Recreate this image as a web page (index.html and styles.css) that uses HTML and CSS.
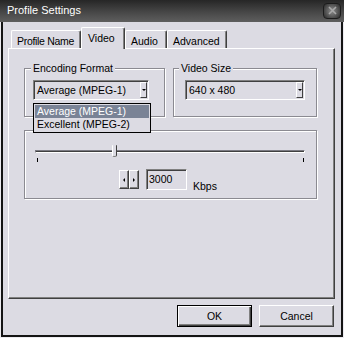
FILE: index.html
```html
<!DOCTYPE html>
<html lang="en">
<head>
    <meta charset="UTF-8">
    <title>Profile Settings</title>
    <link rel="stylesheet" href="styles.css">
</head>
<body>
    <div class="window">
        <!-- title bar -->
        <div class="titlebar">
            <span class="title">Profile Settings</span>
            <span class="close">
                <svg width="9" height="9" viewBox="0 0 9 9"><path d="M1 1 L8 8 M8 1 L1 8" stroke="#a9a9a9" stroke-width="1.6"/></svg>
            </span>
        </div>

        <div class="frame">
            <div class="client">
                <div class="tabs">
                    <div class="tab tab-name">Profile Name</div>
                    <div class="tab tab-video active">Video</div>
                    <div class="tab tab-audio">Audio</div>
                    <div class="tab tab-adv">Advanced</div>
                </div>

                <div class="panel">
                    <div class="group-row">
                        <fieldset class="group group-enc">
                            <legend>Encoding Format</legend>
                            <div class="combo-wrap">
                                <div class="combo combo-enc">
                                    <span class="combo-text">Average (MPEG-1)</span>
                                    <span class="combo-btn"></span>
                                </div>
                                <!-- open drop list -->
                                <ul class="droplist">
                                    <li class="sel">Average (MPEG-1)</li>
                                    <li>Excellent (MPEG-2)</li>
                                </ul>
                            </div>
                        </fieldset>
                        <fieldset class="group group-size">
                            <legend>Video Size</legend>
                            <div class="combo combo-size">
                                <span class="combo-text">640 x 480</span>
                                <span class="combo-btn"></span>
                            </div>
                        </fieldset>
                    </div>

                    <fieldset class="group group-rate">
                        <div class="slider">
                            <div class="track"></div>
                            <span class="thumb"></span>
                        </div>
                        <div class="ticks"><span></span><span></span></div>
                        <div class="rate-row">
                            <div class="spin">
                                <span class="spin-btn"><i class="arr-left"></i></span>
                                <span class="spin-btn"><i class="arr-right"></i></span>
                            </div>
                            <div class="edit">3000</div>
                            <span class="unit">Kbps</span>
                        </div>
                    </fieldset>
                </div>

                <div class="buttons">
                    <button class="btn default">OK</button>
                    <button class="btn">Cancel</button>
                </div>
            </div>
        </div>
    </div>
</body>
</html>
```

FILE: styles.css
```css
* {
    box-sizing: border-box;
    margin: 0;
    padding: 0;
}
body {
    background: #dcdbe3;
    font-family: "Liberation Sans", Arial, sans-serif;
    font-size: 10.5px;
    line-height: 13px;
    color: #000;
    overflow: hidden;
}
.window {
    width: 344px;
    height: 338px;
    display: flex;
    flex-direction: column;
}

/* title bar */
.titlebar {
    height: 22px;
    display: flex;
    align-items: center;
    justify-content: space-between;
    padding: 0 3px 1px 7px;
    background: linear-gradient(to bottom, #262626, #474747 55%, #5e5e5e);
}
.title {
    color: #fff;
    font-size: 11px;
}
.close {
    width: 18px;
    height: 16px;
    display: flex;
    align-items: center;
    justify-content: center;
    border: 1px solid #1c1c1c;
    border-radius: 4px;
    background: radial-gradient(circle, #7a7a7a 20%, #3e3e3e 80%);
}

.frame {
    flex: 1;
    display: flex;
    border: 1px solid #ecebf0;
    border-top: none;
}
.client {
    flex: 1;
    display: flex;
    flex-direction: column;
    border: 2px solid #141414;
    border-top: none;
    padding: 5px 6px 8px 5px;
}

/* tabs */
.tabs {
    height: 21px;
    display: flex;
    align-items: flex-end;
    padding-left: 3px;
}
.tab {
    height: 18px;
    padding: 4px 0 0 5px;
    border-top: 1px solid #fff;
    border-left: 1px solid #fff;
    border-right: 1px solid #404040;
    border-radius: 2px 2px 0 0;
    box-shadow: inset -1px 0 0 #808080;
    background: #dcdbe3;
    white-space: nowrap;
    overflow: hidden;
}
.tab-name {
    width: 70px;
    letter-spacing: -0.3px;
}
.tab-video { width: 44px; }
.tab-audio { width: 42px; }
.tab-adv { width: 60px; }
.tab.active {
    height: 22px;
    margin-bottom: -1px;
    padding-left: 6px;
    position: relative;
    z-index: 1;
}

/* tab page */
.panel {
    height: 251px;
    padding: 13px 0 0 15px;
    border-top: 1px solid #fff;
    border-left: 1px solid #fff;
    border-right: 1px solid #404040;
    border-bottom: 1px solid #404040;
    box-shadow: inset -1px -1px 0 #808080;
}
.group-row {
    display: flex;
    gap: 8px;
}
.group {
    min-width: 0;
    border: 1px solid #8b8a91;
    box-shadow: 1px 1px 0 #fff, inset 1px 1px 0 #fff;
}
.group legend {
    padding: 0 2px;
    background: #dcdbe3;
    line-height: 13px;
}
.group-enc {
    width: 141px;
    padding: 5px 15px 16px 8px;
}
.group-enc legend { margin-left: -2px; }
.group-size {
    width: 144px;
    padding: 5px 11px 16px 11px;
}
.group-size legend { margin-left: -6px; }

/* combo boxes */
.combo-wrap {
    position: relative;
}
.combo {
    height: 20px;
    display: flex;
    align-items: center;
    justify-content: space-between;
    padding: 0 1px 0 3px;
    border-top: 1px solid #808080;
    border-left: 1px solid #808080;
    border-right: 1px solid #fff;
    border-bottom: 1px solid #fff;
    box-shadow: inset 1px 1px 0 #404040;
}
.combo-enc { width: 116px; }
.combo-size { width: 120px; }
.combo-text {
    padding-top: 1px;
}
.combo-btn {
    width: 7px;
    height: 16px;
    display: flex;
    align-items: center;
    justify-content: center;
    border-top: 1px solid #fff;
    border-left: 1px solid #fff;
    border-right: 1px solid #404040;
    border-bottom: 1px solid #404040;
}
.combo-btn::after {
    content: "";
    border-left: 2px solid transparent;
    border-right: 2px solid transparent;
    border-top: 2px solid #000;
}
.droplist {
    position: absolute;
    top: 23px;
    left: 0;
    width: 118px;
    z-index: 2;
    list-style: none;
    padding: 1px;
    border: 1px solid #000;
    background: #dcdbe3;
}
.droplist li {
    height: 13px;
    padding-left: 2px;
}
.droplist li.sel {
    background: #7a8396;
    color: #fff;
}

/* bitrate group */
.group-rate {
    width: 293px;
    margin-top: 13px;
    padding: 0 11px 7px 10px;
}
.slider {
    position: relative;
    height: 13px;
    margin-top: 14px;
    padding-top: 5px;
}
.track {
    height: 3px;
    border-top: 1px solid #7b7a82;
    border-left: 1px solid #7b7a82;
    border-bottom: 1px solid #fff;
    border-right: 1px solid #fff;
    background: #404040;
}
.thumb {
    position: absolute;
    top: 0;
    left: 77px;
    width: 5px;
    height: 12px;
    background: #dcdbe3;
    border-left: 1px solid #fff;
    border-right: 1px solid #404040;
    border-bottom: 1px solid #808080;
    border-radius: 1px 1px 2px 2px;
}
.ticks {
    height: 5px;
    display: flex;
    justify-content: space-between;
    padding: 0 1px 0 2px;
}
.ticks span {
    width: 1px;
    height: 4px;
    background: #000;
}
.rate-row {
    height: 22px;
    margin-top: 6px;
    display: flex;
    align-items: flex-end;
    padding-left: 84px;
}
.spin {
    display: flex;
    align-self: flex-start;
    margin-top: 1px;
}
.spin-btn {
    width: 10px;
    height: 19px;
    display: flex;
    align-items: center;
    justify-content: center;
    border-top: 1px solid #fff;
    border-left: 1px solid #fff;
    border-right: 1px solid #404040;
    border-bottom: 1px solid #404040;
    box-shadow: inset -1px -1px 0 #808080;
}
.arr-left {
    border-top: 2px solid transparent;
    border-bottom: 2px solid transparent;
    border-right: 2px solid #000;
}
.arr-right {
    border-top: 2px solid transparent;
    border-bottom: 2px solid transparent;
    border-left: 2px solid #000;
}
.edit {
    width: 41px;
    height: 21px;
    margin-left: 7px;
    align-self: flex-start;
    padding: 3px 0 0 2px;
    border-top: 1px solid #808080;
    border-left: 1px solid #808080;
    border-right: 1px solid #fff;
    border-bottom: 1px solid #fff;
    box-shadow: inset 1px 1px 0 #404040;
}
.unit {
    margin-left: 6px;
    margin-bottom: -2px;
}

/* dialog buttons */
.buttons {
    display: flex;
    justify-content: flex-end;
    gap: 7px;
    margin-top: 6px;
    padding-right: 1px;
}
.btn {
    width: 75px;
    height: 22px;
    font-family: "Liberation Sans", Arial, sans-serif;
    font-size: 10.5px;
    color: #000;
    background: #dcdbe3;
    border-top: 1px solid #fff;
    border-left: 1px solid #fff;
    border-right: 1px solid #404040;
    border-bottom: 1px solid #404040;
    box-shadow: inset -1px -1px 0 #808080;
}
.btn.default {
    border: 1px solid #000;
    box-shadow: inset 1px 1px 0 #fff, inset -1px -1px 0 #404040, inset -2px -2px 0 #808080;
}
```
